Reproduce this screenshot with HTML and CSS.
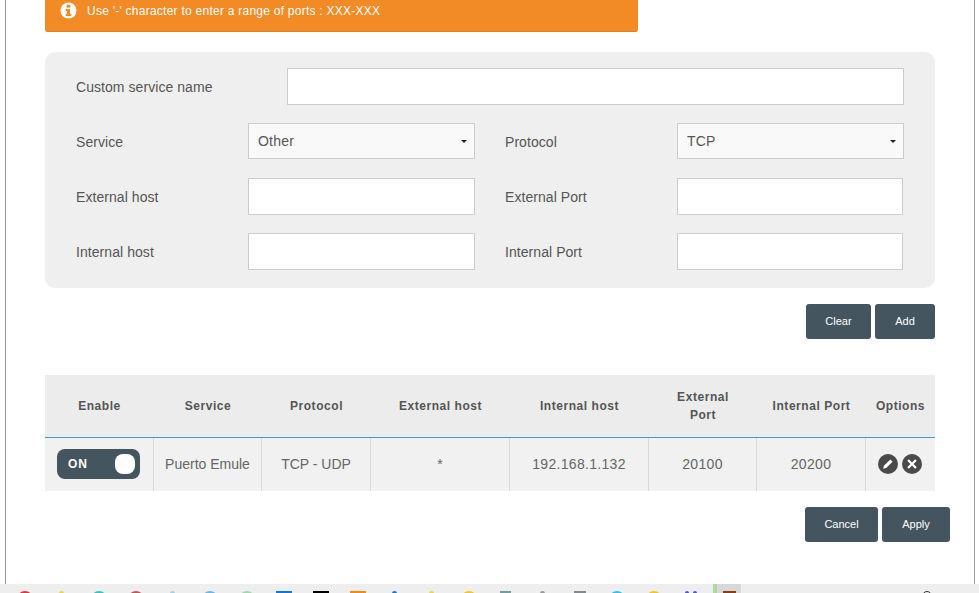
FILE: index.html
```html
<!DOCTYPE html>
<html lang="en">
<head>
<meta charset="utf-8">
<title>Port forwarding</title>
<link rel="stylesheet" href="styles.css">
</head>
<body>
<main class="frame">
  <div class="alert">
    <svg class="alert-icon" viewBox="0 0 18 18" aria-hidden="true"><circle cx="9" cy="9" r="8.5" fill="#fff"/><rect x="7" y="3" width="4" height="3" fill="#f28b26"/><path d="M6 7.5h4.6v5.2H12v2H6v-2h1.3V9.5H6z" fill="#f28b26"/></svg>
    <span class="alert-text">Use '-' character to enter a range of ports : XXX-XXX</span>
  </div>

  <form class="panel">
    <div class="row">
      <label class="label label-wide">Custom service name</label>
      <input class="field field-full" type="text">
    </div>
    <div class="row">
      <label class="label">Service</label>
      <span class="select"><select><option>Other</option></select></span>
      <label class="label label-right">Protocol</label>
      <span class="select"><select><option>TCP</option></select></span>
    </div>
    <div class="row">
      <label class="label">External host</label>
      <input class="field" type="text">
      <label class="label label-right">External Port</label>
      <input class="field field-narrow" type="text">
    </div>
    <div class="row">
      <label class="label">Internal host</label>
      <input class="field" type="text">
      <label class="label label-right">Internal Port</label>
      <input class="field field-narrow" type="text">
    </div>
  </form>

  <div class="actions actions-form">
    <button class="btn btn-clear" type="button">Clear</button>
    <button class="btn btn-add" type="button">Add</button>
  </div>

  <table class="rules">
    <colgroup>
      <col class="c1"><col class="c2"><col class="c3"><col class="c4"><col class="c5"><col class="c6"><col class="c7"><col class="c8">
    </colgroup>
    <thead>
      <tr>
        <th>Enable</th><th>Service</th><th>Protocol</th><th>External host</th><th>Internal host</th><th>External Port</th><th>Internal Port</th><th>Options</th>
      </tr>
    </thead>
    <tbody>
      <tr>
        <td class="toggle-cell"><span class="toggle"><span class="toggle-text">ON</span><span class="knob"></span></span></td>
        <td>Puerto Emule</td>
        <td>TCP - UDP</td>
        <td>*</td>
        <td class="num">192.168.1.132</td>
        <td class="num">20100</td>
        <td class="num">20200</td>
        <td class="options">
          <span class="option-icons">
            <svg class="opt" viewBox="0 0 20 20" aria-hidden="true"><circle cx="10" cy="10" r="10" fill="#4a4a4a"/><path d="M12.3 5.4l2.3 2.3-6.4 6.4-3 .7.7-3z" fill="#fff"/></svg>
            <svg class="opt" viewBox="0 0 20 20" aria-hidden="true"><circle cx="10" cy="10" r="10" fill="#4a4a4a"/><path d="M6.8 5.3L10 8.4l3.2-3.1 1.5 1.5L11.6 10l3.1 3.2-1.5 1.5L10 11.6l-3.2 3.1-1.5-1.5L8.4 10 5.3 6.8z" fill="#fff"/></svg>
          </span>
        </td>
      </tr>
    </tbody>
  </table>

  <div class="actions actions-page">
    <button class="btn btn-cancel" type="button">Cancel</button>
    <button class="btn btn-apply" type="button">Apply</button>
  </div>
</main>

<footer class="taskbar">
  <span class="slot"><i class="ico round red"></i></span>
  <span class="slot"><i class="ico round small yellow"></i></span>
  <span class="slot"><i class="ico round teal"></i></span>
  <span class="slot"><i class="ico round brick"></i></span>
  <span class="slot"><i class="ico round small sky"></i></span>
  <span class="slot"><i class="ico round azure"></i></span>
  <span class="slot"><i class="ico round mint"></i></span>
  <span class="slot"><i class="ico square blue"></i></span>
  <span class="slot"><i class="ico square black"></i></span>
  <span class="slot"><i class="ico square orange"></i></span>
  <span class="slot"><i class="ico round small blue"></i></span>
  <span class="slot"><i class="ico round small yellow"></i></span>
  <span class="slot"><i class="ico round amber"></i></span>
  <span class="slot"><i class="ico square pine"></i></span>
  <span class="slot"><i class="ico round small gray"></i></span>
  <span class="slot"><i class="ico square slate"></i></span>
  <span class="slot"><i class="ico round cyan"></i></span>
  <span class="slot"><i class="ico round amber"></i></span>
  <span class="slot"><i class="ico round dots indigo"></i></span>
  <span class="slot slot-active"><i class="ico square brown"></i></span>
  <span class="tray"></span>
</footer>
</body>
</html>
```
FILE: styles.css
```css
* { box-sizing: border-box; }

html, body {
  margin: 0;
  height: 593px;
  overflow: hidden;
  background: #fff;
}

body {
  font-family: "Liberation Sans", Arial, sans-serif;
  font-size: 14px;
  color: #555;
}

.frame {
  width: 970px;
  height: 584px;
  margin-left: 5px;
  padding: 0 24px 0 39px;
  border-left: 1px solid #999;
  border-right: 1px solid #999;
  overflow: hidden;
}

.alert {
  display: flex;
  align-items: flex-start;
  gap: 10px;
  width: 593px;
  height: 32px;
  padding: 2px 0 0 15px;
  background: #f28b26;
  border-bottom: 1px solid #df7f1f;
  border-radius: 0 0 3px 3px;
  color: #fff;
  font-size: 12px;
  line-height: 17px;
  letter-spacing: 0.25px;
}

.alert-text { padding-top: 1px; }

.alert-icon { width: 17px; height: 17px; flex: none; }

.panel {
  display: flex;
  flex-direction: column;
  gap: 18px;
  width: 890px;
  height: 236px;
  margin-top: 20px;
  padding: 16px 31px 0;
  background: #efefef;
  border-radius: 10px;
}

.row {
  display: flex;
  align-items: center;
  height: 37px;
}

.label {
  flex: none;
  width: 172px;
  letter-spacing: 0.06px;
  line-height: 16px;
}

.label-wide { width: 211px; }
.label-right { width: 172px; margin-left: 30px; }

.field {
  flex: none;
  width: 227px;
  height: 37px;
  background: #fff;
  border: 1px solid #ccc;
  border-radius: 0;
  padding: 0 9px;
  outline: none;
}

.field-full { width: 617px; }
.field-narrow { width: 226px; }

.select {
  position: relative;
  flex: none;
  display: block;
  width: 227px;
  height: 36px;
  margin-bottom: 1px;
}

.select::after {
  content: "";
  position: absolute;
  right: 8px;
  top: 17px;
  border: 3px solid transparent;
  border-top-color: #222;
  border-bottom: 0;
}

.select select {
  display: block;
  width: 100%;
  height: 100%;
  padding: 0 9px;
  appearance: none;
  background: #f9f9f9;
  border: 1px solid #ccc;
  border-radius: 0;
  font: 14px "Liberation Sans", Arial, sans-serif;
  letter-spacing: 0.2px;
  color: #555;
}

.actions {
  display: flex;
  justify-content: flex-end;
  gap: 4px;
}

.actions-form { width: 890px; margin-top: 16px; }
.actions-page { width: 905px; margin-top: 16px; }

.btn {
  height: 35px;
  padding: 0 0 2px;
  background: #44555f;
  color: #fff;
  border: 0;
  border-radius: 3px;
  font: 11px "Liberation Sans", Arial, sans-serif;
}

.btn-clear { width: 65px; }
.btn-add { width: 60px; }
.btn-cancel { width: 73px; }
.btn-apply { width: 68px; }

.rules {
  width: 890px;
  margin-top: 36px;
  table-layout: fixed;
  border-collapse: separate;
  border-spacing: 0;
  text-align: center;
}

.c1 { width: 109px; }
.c2 { width: 108px; }
.c3 { width: 109px; }
.c4 { width: 139px; }
.c5 { width: 139px; }
.c6 { width: 108px; }
.c7 { width: 109px; }
.c8 { width: 69px; }

.rules th {
  height: 63px;
  padding: 0 14px;
  background: #ececec;
  border-bottom: 1px solid #4a96c9;
  font-size: 12px;
  line-height: 18px;
  letter-spacing: 0.55px;
  color: #555;
  font-weight: bold;
}

.rules th:last-child { padding: 0; }

.rules td {
  height: 53px;
  padding: 0 0 2px;
  background: #f1f1f1;
  border-right: 1px solid #d9d9d9;
  font-size: 14px;
  letter-spacing: 0;
  color: #666;
}

.rules td:last-child { border-right: 0; }

.rules .num { letter-spacing: 0.3px; }

.rules .toggle-cell {
  padding-left: 12px;
  text-align: left;
}

.toggle {
  display: flex;
  align-items: center;
  justify-content: space-between;
  width: 83px;
  height: 30px;
  padding: 0 5px 0 11px;
  background: #44555f;
  border-radius: 8px;
  color: #fff;
  font-size: 12px;
  font-weight: bold;
  letter-spacing: 1px;
}

.knob {
  width: 20px;
  height: 20px;
  background: #fff;
  border-radius: 8px;
}

.option-icons {
  display: flex;
  gap: 4px;
  padding-left: 12px;
}

.opt { width: 20px; height: 20px; }

.taskbar {
  display: flex;
  height: 9px;
  padding: 0 0 0 6px;
  background: #eee;
  overflow: hidden;
}

.slot {
  flex: none;
  width: 37px;
  height: 9px;
  padding-top: 7px;
  display: flex;
  justify-content: center;
}

.slot-active {
  width: 28px;
  margin-left: 4px;
  background: #d8d8d8;
  border-left: 4px solid #b2d9a4;
}

.ico { display: block; flex: none; width: 16px; height: 16px; }
.round { border-radius: 50%; }
.small { width: 5px; height: 5px; }
.dots { width: 4px; height: 4px; margin-right: 8px; box-shadow: 8px 0 0 #4a55d0; }
.square { border-radius: 0; }

.red { background: #e8323c; }
.yellow { background: #f5d32a; }
.teal { background: #2cc7c4; }
.brick { background: #c8584e; }
.sky { background: #9ad4ea; }
.azure { background: #5cbcec; }
.mint { background: #9adca4; }
.blue { background: #0f78d4; }
.black { background: #000; }
.orange { background: #f28a16; }
.amber { background: #f5c518; }
.pine { width: 11px; background: #6f9ea0; }
.gray { background: #999; }
.slate { width: 12px; background: #7f8a92; }
.cyan { background: #2ac4f0; }
.indigo { background: #4a55d0; }
.brown { width: 13px; background: #8a3d14; }

.tray {
  flex: none;
  width: 10px;
  height: 10px;
  margin: 7px 0 0 181px;
  border: 1px solid #333;
  border-radius: 50%;
}
```
